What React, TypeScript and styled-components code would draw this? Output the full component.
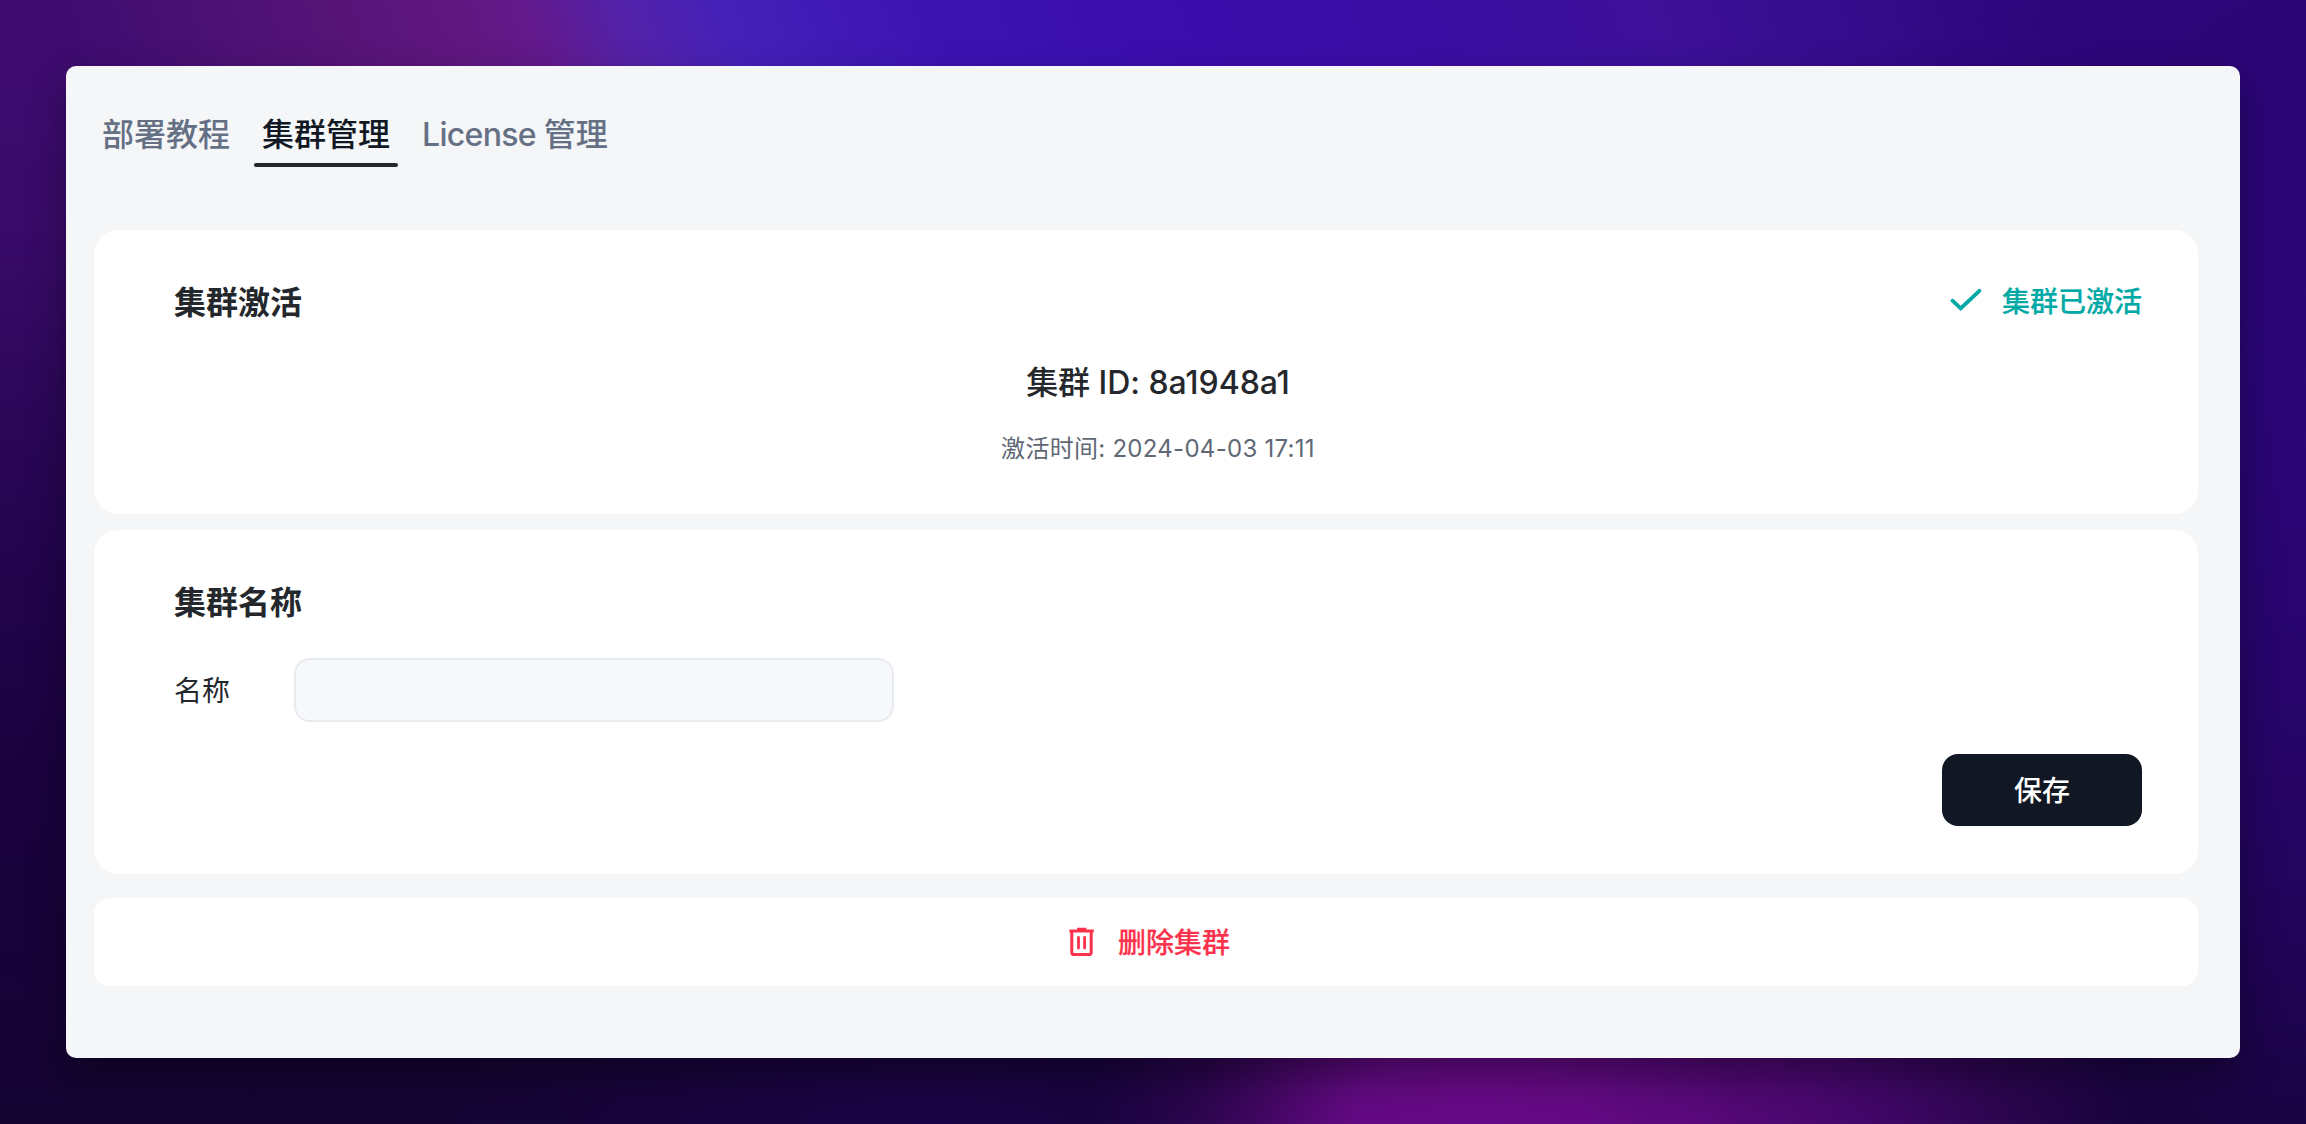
import React from "react";
import styled, { createGlobalStyle, css } from "styled-components";

const GlobalStyle = createGlobalStyle`
  * { box-sizing: border-box; }
  body {
    margin: 0;
    font-family: Inter, "Noto Sans CJK SC", sans-serif;
    color: #24282c;
  }
  button { font-family: inherit; cursor: pointer; border: 0; }
`;

const Backdrop = styled.div`
  width: 2306px;
  height: 1124px;
  padding: 66px;
  overflow: hidden;
  background:
    radial-gradient(ellipse 380px 260px at 1470px 1124px, #680a88 0%, rgba(102, 10, 134, 0.95) 30%, rgba(80, 8, 110, 0.35) 72%, rgba(60, 6, 100, 0) 100%),
    radial-gradient(ellipse 440px 320px at 1700px 1124px, rgba(92, 9, 128, 0.95) 0%, rgba(80, 8, 122, 0.75) 40%, rgba(50, 5, 100, 0) 100%),
    radial-gradient(ellipse 480px 860px at 2306px 440px, rgba(44, 6, 124, 0.85) 0%, rgba(42, 5, 114, 0.7) 45%, rgba(34, 4, 88, 0) 100%),
    radial-gradient(ellipse 500px 200px at 930px 1124px, rgba(28, 4, 72, 0.9) 0%, rgba(28, 4, 72, 0) 100%),
    linear-gradient(180deg, transparent 0%, transparent 7%, rgba(22, 0, 60, 0.12) 20%, rgba(22, 0, 62, 0.5) 38%, rgba(22, 0, 60, 0.7) 52%, rgba(22, 1, 56, 0.88) 68%, rgba(22, 2, 54, 0.96) 85%, #140432 100%),
    linear-gradient(70deg, #3e0c70 0%, #3e0c70 17.3%, #561477 27%, #60177f 31.5%, #62198c 34.4%, #5422a8 37.6%, #4520b8 41.5%, #3c13b2 49.3%, #3a0dac 57.9%, #3a0da5 66%, #3c1098 75.8%, #320a86 86%, #2e0680 91.5%, #2e0680 100%);
`;

const Panel = styled.main`
  width: 2174px;
  height: 992px;
  padding: 36px 42px 0 28px;
  border-radius: 10px;
  background: #f4f6f8;
  box-shadow: 0 18px 38px rgba(0, 0, 0, 0.36);
`;

const Tabs = styled.nav`
  display: flex;
  gap: 16px;
  height: 128px;
`;

const Tab = styled.button<{ $active?: boolean }>`
  display: flex;
  flex-direction: column;
  height: 65px;
  padding: 2px 8px 0;
  background: none;
  font-size: 32px;
  line-height: 61px;
  font-weight: 500;
  white-space: pre;
  color: #667085;
  &::after {
    content: "";
    flex: none;
    height: 4px;
    margin: -2px -8px 0;
    border-radius: 2px;
  }
  ${({ $active }) => $active && css`
    color: #111824;
    &::after { background: #24282c; }
  `}
`;

const TabText = styled.span`
  height: 61px;
`;

const Latin = styled.span`
  letter-spacing: -0.7px;
`;

const Card = styled.section<{ $height: number }>`
  height: ${({ $height }) => $height}px;
  padding: 48px 56px 0 80px;
  margin-bottom: 16px;
  border-radius: 24px;
  background: #fff;
`;

const CardHeader = styled.header`
  display: flex;
  justify-content: space-between;
  align-items: center;
  height: 50px;
`;

const CardTitle = styled.h2`
  margin: 0;
  font-size: 32px;
  line-height: 50px;
  font-weight: 600;
`;

const Status = styled.div`
  display: flex;
  align-items: center;
  gap: 20px;
  font-size: 28px;
  line-height: 34px;
  font-weight: 500;
  color: #00a9a6;
  -webkit-text-stroke: 0.2px currentColor;
`;

const Label = styled.span`
  padding-bottom: 2px;
`;

const ClusterInfo = styled.div`
  display: flex;
  flex-direction: column;
  align-items: center;
  padding-top: 31px;
`;

const ClusterId = styled.div`
  font-size: 32px;
  line-height: 48px;
  font-weight: 500;
  letter-spacing: -0.05px;
`;

const ActivatedAt = styled.div`
  margin-top: 26px;
  font-size: 24px;
  line-height: 32px;
  letter-spacing: 0.28px;
  color: #5f6875;
`;

const Field = styled.label`
  display: flex;
  align-items: center;
  padding-top: 30px;
`;

const FieldLabel = styled.span`
  width: 120px;
  padding-bottom: 2px;
  font-size: 28px;
`;

const NameInput = styled.input`
  width: 600px;
  height: 64px;
  border: 2px solid #e8ebf0;
  border-radius: 16px;
  background: #f7f8fa;
  outline: none;
`;

const Actions = styled.div`
  display: flex;
  justify-content: flex-end;
  padding-top: 32px;
`;

const SaveButton = styled.button`
  width: 200px;
  height: 72px;
  padding: 0 0 2px;
  border-radius: 16px;
  background: #111824;
  color: #fff;
  font-size: 28px;
  font-weight: 500;
`;

const DeleteButton = styled.button`
  display: flex;
  align-items: center;
  justify-content: center;
  gap: 20px;
  width: 100%;
  height: 88px;
  margin-top: 24px;
  padding: 0 0 0 4px;
  border-radius: 16px;
  background: #fff;
  color: #fb324b;
  font-size: 28px;
  font-weight: 500;
  -webkit-text-stroke: 0.2px currentColor;
`;

const CheckIcon = () => (
  <svg width="32" height="32" viewBox="0 0 32 32" fill="none" stroke="currentColor" strokeWidth="3.8" strokeLinecap="round">
    <path d="M2.5 13.7 10.7 21.4 29.4 3.8" />
  </svg>
);

const TrashIcon = () => (
  <svg width="32" height="32" viewBox="0 0 32 32" fill="none" stroke="currentColor">
    <path d="M3.4 5H27.8M11 3.2H20.4" strokeWidth="2.8" />
    <path d="M5.8 5V26.2Q5.8 28.6 8.2 28.6H22.8Q25.2 28.6 25.2 26.2V5" strokeWidth="3" />
    <path d="M12.5 11.5V22M18.6 11.5V22" strokeWidth="2.8" strokeLinecap="round" />
  </svg>
);

export default function App() {
  return (
    <>
      <GlobalStyle />
      <Backdrop>
        <Panel>
          <Tabs>
            <Tab><TabText>部署教程</TabText></Tab>
            <Tab $active><TabText>集群管理</TabText></Tab>
            <Tab><TabText><Latin>License </Latin>管理</TabText></Tab>
          </Tabs>
          <Card $height={284}>
            <CardHeader>
              <CardTitle>集群激活</CardTitle>
              <Status>
                <CheckIcon />
                <Label>集群已激活</Label>
              </Status>
            </CardHeader>
            <ClusterInfo>
              <ClusterId>集群 ID: 8a1948a1</ClusterId>
              <ActivatedAt>激活时间: 2024-04-03 17:11</ActivatedAt>
            </ClusterInfo>
          </Card>
          <Card $height={344}>
            <CardHeader>
              <CardTitle>集群名称</CardTitle>
            </CardHeader>
            <Field>
              <FieldLabel>名称</FieldLabel>
              <NameInput />
            </Field>
            <Actions>
              <SaveButton>保存</SaveButton>
            </Actions>
          </Card>
          <DeleteButton>
            <TrashIcon />
            <Label>删除集群</Label>
          </DeleteButton>
        </Panel>
      </Backdrop>
    </>
  );
}
